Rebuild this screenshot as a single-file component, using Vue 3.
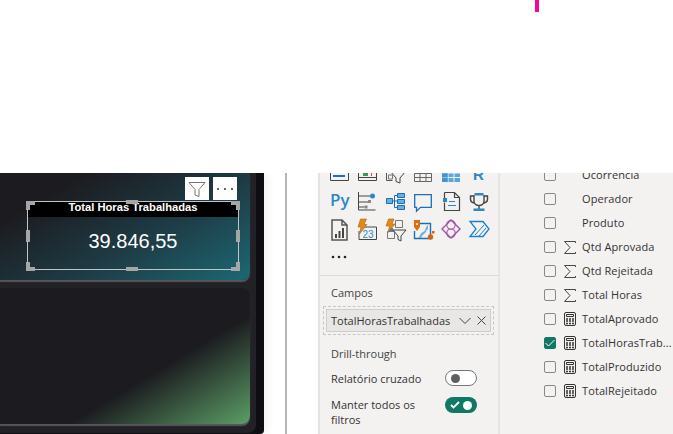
<script setup>
const fields = [
  { name: 'Ocorrência', top: true },
  { name: 'Operador' },
  { name: 'Produto' },
  { name: 'Qtd Aprovada', icon: 'sum' },
  { name: 'Qtd Rejeitada', icon: 'sum' },
  { name: 'Total Horas', icon: 'sum' },
  { name: 'TotalAprovado', icon: 'calc' },
  { name: 'TotalHorasTrab...', icon: 'calc', checked: true },
  { name: 'TotalProduzido', icon: 'calc' },
  { name: 'TotalRejeitado', icon: 'calc' }
]
</script>

<template>
  <div class="page">
    <div class="topbar"><span class="pink"></span></div>
    <div class="main">
      <section class="canvas">
        <div class="frame">
          <div class="tile tile-top">
            <div class="visual">
              <div class="head">Total Horas Trabalhadas</div>
              <div class="value">39.846,55</div>
              <i class="h tl"></i><i class="h tr"></i><i class="h bl"></i><i class="h br"></i>
              <i class="h tm"></i><i class="h bm"></i><i class="h ml"></i><i class="h mr"></i>
              <div class="tools">
                <span class="tool">
                  <svg width="18" height="20" viewBox="0 0 18 20" fill="none" stroke="#777"><path d="M1 3.500h16l-6 7v7l-4-1.500v-5.500z"/></svg>
                </span>
                <span class="tool">
                  <svg width="18" height="4" viewBox="0 0 18 4" fill="#666"><rect x="1" y="1" width="2" height="2"/><rect x="8" y="1" width="2" height="2"/><rect x="15" y="1" width="2" height="2"/></svg>
                </span>
              </div>
            </div>
          </div>
          <div class="tile tile-bottom"></div>
        </div>
      </section>

      <div class="gap"></div>

      <aside class="viz">
        <div class="icons">
          <!-- row 1, cut off by the white band above -->
          <svg viewBox="0 0 24 24" fill="none"><path d="M3.500 0v19.500h18V0" stroke="#444"/><path d="M6 15h12" stroke="#1b6fb5" stroke-width="2"/></svg>
          <svg viewBox="0 0 24 24" fill="none"><path d="M3.500 0v19.500h18V0M3.500 16.500h18" stroke="#444"/><path d="M8 12h5v3H8z" fill="#3a9a5c"/><path d="M16.500 11v4" stroke="#d8473a"/></svg>
          <svg viewBox="0 0 24 24" fill="none"><path d="M3.500 0v19.500h6M3.500 9.500h9" stroke="#555"/><path d="M5.500 14h4v4h-4z" stroke="#777"/><path d="M8 11h14l-5 6v5l-4-1.500V17z" fill="#f3f2f1" stroke="#444"/></svg>
          <svg viewBox="0 0 24 24" fill="none"><path d="M3.500 12.500h17v8h-17zM3.500 16.500h17M9 12.500v8M15 12.500v8" stroke="#666"/></svg>
          <svg viewBox="0 0 24 24" fill="none"><path d="M3 12h18v9H3z" fill="#5aa6e0"/><path d="M3 12h18M3 16.500h18M9 12v9M15 12v9" stroke="#f3f2f1"/><path d="M3 12h6v9H3z" fill="#2f7fc0" opacity=".5"/></svg>
          <svg viewBox="0 0 24 24"><text x="6" y="19" class="r">R</text></svg>
          <!-- row 2 -->
          <svg viewBox="0 0 24 24"><text x="3" y="17" class="py">Py</text></svg>
          <svg viewBox="0 0 24 24" fill="none"><path d="M3.500 3v18h17M3.500 7h12M3.500 18h6M13 13H3.500" stroke="#444"/><circle cx="17.500" cy="7" r="2.500" fill="#2f86c6"/><path d="M9.500 16.500h3v3h-3zM13 11h3v3h-3z" fill="#888"/></svg>
          <svg viewBox="0 0 24 24" fill="none"><path d="M9 12h5M11.500 6.500h3M11.500 18.500h3M11.500 6.500v12" stroke="#1b6fb5"/><path d="M3.500 9.500h6v5h-6zM14.500 4.500h7v4h-7zM14.500 10.500h7v4h-7zM14.500 16.500h7v4h-7z" fill="#67b0e6" stroke="#1b6fb5"/></svg>
          <svg viewBox="0 0 24 24" fill="none"><path d="M3.700 5.700h16.600v12.600H9.500l-4 4v-4H3.700z" stroke="#1b6fb5" stroke-width="1.300"/></svg>
          <svg viewBox="0 0 24 24" fill="none"><path d="M5.500 3.500h10l5 5v13h-15v-8M5.500 9V3.500M15.500 3.500v5h5" stroke="#444" stroke-width="1.200"/><path d="M4 9h4v4H4z" fill="#2f86c6"/><path d="M10 12.500h6M9 16.500h8" stroke="#2f86c6"/></svg>
          <svg viewBox="0 0 24 24" fill="none"><path d="M7 7H3.500v3.500c0 2 1.500 3 3.500 3.500M17 7h3.500v3.500c0 2-1.500 3-3.500 3.500M7 6v6c0 3 2.500 4.500 5 4.500s5-1.500 5-4.500V6M12 16.500V20" stroke="#444" stroke-width="1.400"/><path d="M7.500 4h9v2.500h-9zM6.500 19.500h11V22h-11z" fill="#2f86c6"/></svg>
          <!-- row 3 -->
          <svg viewBox="0 0 24 24" fill="none"><path d="M5 3h10l5 5v15H5z M15 3v5h5" stroke="#555" stroke-width="1.500"/><path d="M8 17h2v4H8zM11.500 14h2v7h-2zM15 11h2v10h-2z" fill="#444"/></svg>
          <svg viewBox="0 0 24 24" fill="none"><path d="M7 10h14.500v12.500H4V14" stroke="#444"/><text x="7.500" y="21" class="n">23</text><path d="M5.500 2h6L9 7.500h3L4.500 17l1.500-7H3z" fill="#e28a1c" stroke="#a8610f" stroke-width=".6"/></svg>
          <svg viewBox="0 0 24 24" fill="none"><path d="M12.500 3.500h7v7h-7zM4.500 14.500h7v7h-7z" stroke="#777"/><path d="M10 13h13l-5 6v5l-3-1.500V19z" fill="#f3f2f1" stroke="#444"/><path d="M6 11h4v3H6z" fill="#2f86c6"/><path d="M5.500 2h5.500L9 7h3l-7 8.500L6.500 9H3z" fill="#e28a1c" stroke="#a8610f" stroke-width=".6"/></svg>
          <svg viewBox="0 0 24 24" fill="none"><path d="M8 6.500h11.500v15h-16V14" stroke="#1b6fb5" stroke-width="1.400"/><path d="M7 21c2-1 2-5 5-6 3-1 2-5 5-7v4c-2 1-2 4-4 5-2 1-2 3-3 4z" fill="#6fb0e0"/><path d="M3 3h6v7l-3 4-3-4z" fill="#d9700f"/><circle cx="6" cy="7" r="1" fill="#fff"/><circle cx="19.500" cy="20" r="2.700" fill="#d9620f"/><rect x="21" y="14" width="2.500" height="2.500" fill="#d9620f"/></svg>
          <svg viewBox="0 0 24 24" fill="none" stroke="#a24da8" stroke-width="1.400"><path d="M12 3l9 9-9 9-9-9z"/><path d="M12 3.500a4 4 0 0 1 0 8.500 4 4 0 0 1 0-8.500zM12 12a4 4 0 0 1 0 8.500 4 4 0 0 1 0-8.500z" stroke-width="1.100"/></svg>
          <svg viewBox="0 0 24 24" fill="none" stroke="#1b7fd0" stroke-width="1.300"><path d="M3 4.500h13l6 7.500-6 7.500H3l6-7.500z"/><path d="M8 18l9-10M12 19l7-8" stroke-width="1"/></svg>
          <svg viewBox="0 0 24 24" fill="#222"><circle cx="6" cy="12" r="1.300"/><circle cx="12" cy="12" r="1.300"/><circle cx="18" cy="12" r="1.300"/></svg>
        </div>
        <div class="section">
          <div class="label">Campos</div>
          <div class="well">
            <div class="pill">
              <span>TotalHorasTrabalhadas</span>
              <svg width="12" height="8" viewBox="0 0 12 8" fill="none" stroke="#444"><path d="M.5 1l5.500 5.500L11.500 1"/></svg>
              <svg class="x" width="9" height="9" viewBox="0 0 9 9" fill="none" stroke="#444"><path d="M.5.5l8 8M8.500.5l-8 8"/></svg>
            </div>
          </div>
          <div class="label drill">Drill-through</div>
          <div class="opt">
            <span>Relatório cruzado</span>
            <span class="toggle off"><i></i></span>
          </div>
          <div class="opt keep">
            <span>Manter todos os filtros</span>
            <span class="toggle active">
              <svg width="10" height="8" viewBox="0 0 10 8" fill="none" stroke="#fff" stroke-width="1.800"><path d="M1 4l2.500 2.500L9 1"/></svg>
              <i></i>
            </span>
          </div>
        </div>
      </aside>

      <aside class="fields">
        <div v-for="f in fields" :key="f.name" class="row" :class="{ first: f.top }">
          <span class="box" :class="{ checked: f.checked }">
            <svg v-if="f.checked" width="10" height="8" viewBox="0 0 10 8" fill="none" stroke="#fff"><path d="M.5 4l3 3L9.500 1"/></svg>
          </span>
          <span class="kind">
            <svg v-if="f.icon === 'sum'" width="12" height="13" viewBox="0 0 12 13" fill="none" stroke="#444"><path d="M11.500 2V.5H.5l5.500 6-5.500 6h11V11"/></svg>
            <svg v-if="f.icon === 'calc'" width="12" height="14" viewBox="0 0 12 14" fill="none" stroke="#333"><rect x=".5" y=".5" width="11" height="13" rx="1.500"/><path d="M2.500 2.500h7v2h-7z"/><path d="M2 7h2M5 7h2M8 7h2M2 9h2M5 9h2M8 9h2M2 11.500h2M5 11.500h2M8 11.500h2" stroke-width="1.300"/></svg>
          </span>
          <span class="name">{{ f.name }}</span>
        </div>
      </aside>
    </div>
  </div>
</template>

<style>
html, body { margin: 0; background: #fff; }
</style>

<style scoped>
.page {
  width: 673px;
  height: 434px;
  overflow: hidden;
  font-family: "Open Sans", "Noto Sans", sans-serif;
  background: #fff;
}
.topbar {
  position: relative;
  z-index: 1;
  height: 173px;
  background: #fff;
}
.pink {
  display: block;
  width: 4px;
  height: 12px;
  margin-left: 535px;
  background: #f0079a;
}
.main {
  display: flex;
  height: 261px;
}
.canvas {
  width: 264px;
  flex: none;
  background: #0e0d12;
  border-bottom-right-radius: 4px;
  box-shadow: 4px 0 8px rgba(0, 0, 0, 0.05);
  height: 261px;
}
.frame {
  width: 256px;
  height: 260px;
  background: #212126;
  border-bottom-right-radius: 8px;
  box-sizing: border-box;
  padding-right: 6px;
}
.tile {
  width: 250px;
  border-radius: 0 0 8px 0;
}
.tile-top {
  height: 107px;
  background: linear-gradient(150deg, #1c1c20 20%, #1e3a44 58%, #1c6873 100%);
  box-shadow: 0 2px 1px #55555a;
  padding-top: 28px;
  box-sizing: border-box;
}
.tile-bottom {
  height: 136px;
  margin-top: 8px;
  border-radius: 0 8px 8px 0;
  background: linear-gradient(149deg, #1c1c20 62%, #5c9e66 100%);
  box-shadow: 0 2px 1px #55555a;
}
.visual {
  position: relative;
  margin-left: 27px;
  width: 212px;
  height: 69px;
  border: 1px solid #c4c4c4;
  box-sizing: border-box;
}
.head {
  height: 15px;
  background: #000;
  color: #fff;
  font: bold 11.200px/11px "Liberation Sans", Arial, sans-serif;
  text-align: center;
}
.value {
  margin-top: 11px;
  color: #fff;
  font: 20px/26px "Liberation Sans", Arial, sans-serif;
  text-align: center;
}
.h {
  position: absolute;
  background: #a6a6a6;
}
.tl, .tr, .bl, .br { width: 9px; height: 9px; }
.tl { left: -2px; top: -1px; clip-path: polygon(0 0, 100% 0, 100% 45%, 45% 45%, 45% 100%, 0 100%); }
.tr { right: -2px; top: -1px; clip-path: polygon(0 0, 100% 0, 100% 100%, 55% 100%, 55% 45%, 0 45%); }
.bl { left: -2px; bottom: -2px; clip-path: polygon(0 0, 45% 0, 45% 55%, 100% 55%, 100% 100%, 0 100%); }
.br { right: -2px; bottom: -2px; clip-path: polygon(55% 0, 100% 0, 100% 100%, 0 100%, 0 55%, 55% 55%); }
.tm, .bm { left: 98px; width: 12px; height: 4px; }
.tm { top: -2px; }
.bm { bottom: -2px; }
.ml, .mr { top: 28px; width: 4px; height: 12px; }
.ml { left: -2px; }
.mr { right: -2px; }
.tools {
  position: absolute;
  top: -25px;
  right: 1px;
  display: flex;
  gap: 4px;
}
.tool {
  width: 24px;
  height: 23px;
  background: #fff;
  display: flex;
  align-items: center;
  justify-content: center;
}
.gap {
  width: 23px;
  flex: none;
  border-right: 2px solid #b5b5b5;
  box-sizing: border-box;
}
.viz {
  width: 182px;
  margin-left: 31px;
  flex: none;
  background: #f3f2f1;
  border-left: 2px solid #e6e4e2;
  border-right: 2px solid #e6e4e2;
  box-sizing: border-box;
}
.icons {
  display: grid;
  grid-template-columns: repeat(6, 28px);
  grid-auto-rows: 28px;
  place-items: center;
  margin-top: -14px;
  padding-left: 5px;
  height: 117px;
  border-bottom: 1px solid #dddbd9;
  box-sizing: border-box;
}
.icons svg {
  width: 24px;
  height: 24px;
  overflow: visible;
}
.r {
  font: bold 15px "Liberation Sans", Arial, sans-serif;
  fill: #2f86c6;
}
.py {
  font: 600 17px "Open Sans", sans-serif;
  fill: #2f86c6;
}
.n {
  font: 10px "Liberation Sans", Arial, sans-serif;
  fill: #2f86c6;
}
.section {
  padding: 9px 4px 0 3px;
}
.label {
  margin-left: 8px;
  font-size: 11px;
  line-height: 15px;
  color: #444;
}
.well {
  margin-top: 6px;
  border: 1px dashed #c8c6c4;
  padding: 2px;
}
.pill {
  height: 23px;
  background: #e9e7e5;
  border: 1px solid #d0cecc;
  box-sizing: border-box;
  display: flex;
  align-items: center;
  padding: 0 4px;
  font-size: 11px;
  color: #333;
}
.pill span {
  flex: 1;
  white-space: nowrap;
}
.x {
  margin-left: 6px;
}
.drill {
  margin-top: 11px;
}
.opt {
  margin: 9px 17px 0 8px;
  display: flex;
  justify-content: space-between;
  align-items: flex-start;
  font-size: 11px;
  line-height: 16px;
  color: #333;
}
.opt > span:first-child {
  margin-top: 1px;
}
.keep {
  margin-top: 10px;
  line-height: 15px;
}
.keep > span:first-child {
  width: 100px;
  margin-top: 0;
}
.toggle {
  width: 32px;
  height: 16px;
  border-radius: 8px;
  box-sizing: border-box;
  display: flex;
  align-items: center;
  flex: none;
}
.toggle i {
  width: 9px;
  height: 9px;
  border-radius: 50%;
}
.off {
  background: #fff;
  border: 1px solid #777;
  padding-left: 5px;
}
.off i {
  background: #605e5c;
}
.active {
  background: #117865;
  padding: 0 5px;
  justify-content: space-between;
}
.active i {
  background: #fff;
}
.fields {
  flex: 1;
  background: #f3f2f1;
  color: #333;
  font-size: 11px;
}
.row {
  height: 24px;
  display: flex;
  align-items: center;
  padding-left: 44px;
}
.first {
  margin-top: -10px;
}
.box {
  width: 12px;
  height: 12px;
  box-sizing: border-box;
  border: 1px solid #8a8886;
  border-radius: 2px;
  flex: none;
  display: flex;
  align-items: center;
  justify-content: center;
}
.box.checked {
  background: #117865;
  border-color: #117865;
}
.kind {
  width: 18px;
  margin-left: 8px;
  flex: none;
  display: flex;
  align-items: center;
}
.name {
  white-space: nowrap;
  letter-spacing: 0.100px;
  margin-top: -2px;
}
</style>
